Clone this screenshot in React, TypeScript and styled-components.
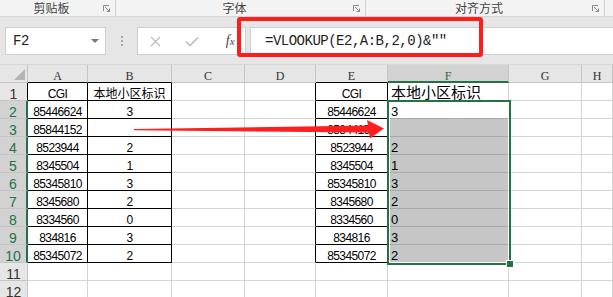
import React from 'react';
import styled, { createGlobalStyle } from 'styled-components';

const GREEN = '#217346';
const GRID = '#d4d4d4';
const HDR_LINE = '#c4c4c4';
const HDR_BG = '#e6e6e6';
const HDR_SEL = '#d2d2d2';
const SEL_FILL = '#c6c6c6';
const NUM_FONT = '"Liberation Sans", "Noto Sans CJK SC", sans-serif';
const CJK_FONT = '"Noto Sans CJK SC", "Liberation Sans", sans-serif';
const MONO_FONT = '"Liberation Mono", monospace';
const SERIF_FONT = '"Liberation Serif", serif';

const Global = createGlobalStyle`
  html, body { margin: 0; padding: 0; background: #e6e6e6; }
  body { width: 613px; height: 297px; overflow: hidden; font-family: ${NUM_FONT}; }
`;

const Page = styled.div`
  position: relative;
  width: 613px;
  height: 297px;
  overflow: hidden;
  background: #e6e6e6;
`;

/* ---------- ribbon group labels ---------- */
const RibbonLabels = styled.div`
  display: flex;
  height: 17px;
  box-sizing: border-box;
  background: #f3f3f3;
  border-bottom: 1px solid #d5d5d5;
`;

const Group = styled.div<{ $w: number }>`
  flex: 0 0 ${(p) => p.$w}px;
  display: flex;
  align-items: center;
  box-sizing: border-box;
  border-right: 1px solid #d2d2d2;
  height: 16px;
`;

const GroupLabel = styled.span`
  flex: 1;
  text-align: center;
  font: 12px/16px ${CJK_FONT};
  color: #444;
`;

const LauncherIcon = styled.svg`
  flex: 0 0 7px;
  width: 7px;
  height: 7px;
  margin-right: 5px;
`;

const Launcher = () => (
  <LauncherIcon viewBox="0 0 7 7">
    <path d="M0.5 6 V0.5 H6" stroke="#8a8a8a" strokeWidth="1" fill="none" />
    <path d="M2 2 L6.2 6.2" stroke="#8a8a8a" strokeWidth="1" fill="none" />
    <path d="M3.5 6.5 H6.5 V3.5" stroke="#8a8a8a" strokeWidth="1" fill="none" />
  </LauncherIcon>
);

/* ---------- formula bar ---------- */
const FormulaArea = styled.div`
  display: flex;
  align-items: center;
  height: 48px;
  box-sizing: border-box;
  padding: 10px 0 9px 5px;
  border-bottom: 1px solid #d6d6d6;
`;

const NameBox = styled.div`
  flex: 0 0 101px;
  height: 28px;
  box-sizing: border-box;
  background: #fff;
  border: 1px solid #cfcfcf;
  display: flex;
  align-items: center;
  padding: 0 6px 0 7px;
  font: 14px ${MONO_FONT};
  letter-spacing: -0.5px;
  color: #222;
`;

const NameText = styled.span`
  flex: 1;
`;

const DropTriangle = styled.span`
  width: 0;
  height: 0;
  border-left: 4px solid transparent;
  border-right: 4px solid transparent;
  border-top: 4px solid #777;
`;

const Splitter = styled.div`
  flex: 0 0 31px;
  display: flex;
  flex-direction: column;
  align-items: center;
  gap: 2px;
`;

const Dot = styled.span`
  width: 2px;
  height: 2px;
  background: #aaa;
`;

const ButtonBox = styled.div`
  flex: 0 0 109px;
  height: 28px;
  box-sizing: border-box;
  background: #fff;
  border: 1px solid #cfcfcf;
  display: flex;
  align-items: center;
`;

const IconSlot = styled.div`
  flex: 1;
  display: flex;
  align-items: center;
  justify-content: center;
`;

const FxText = styled.span`
  font: italic 14px ${SERIF_FONT};
  color: #444;
  margin-left: 6px;
  & > small {
    font-size: 11px;
  }
`;

const FormulaInput = styled.div`
  flex: 1;
  margin-left: 4px;
  height: 28px;
  box-sizing: border-box;
  background: #fff;
  border: 1px solid #cfcfcf;
  border-right: none;
  display: flex;
  align-items: center;
  padding-left: 14px;
  font: 14px ${MONO_FONT};
  letter-spacing: -0.5px;
  color: #222;
  white-space: nowrap;
`;

/* ---------- sheet ---------- */
const Sheet = styled.div`
  position: relative;
  display: grid;
  grid-template-columns: 28px 60px 84px 73px 71px 72px 121px 73px 1fr;
  grid-auto-rows: 18px;
  background: #fff;
`;

const BaseCell = styled.div<{
  $rc?: string;
  $bc?: string;
  $rw?: number;
  $bw?: number;
  $bg?: string;
}>`
  box-sizing: border-box;
  height: 18px;
  white-space: nowrap;
  overflow: visible;
  border-right: ${(p) => p.$rw ?? 1}px solid ${(p) => p.$rc ?? GRID};
  border-bottom: ${(p) => p.$bw ?? 1}px solid ${(p) => p.$bc ?? GRID};
  background: ${(p) => p.$bg ?? '#fff'};
`;

const ColHead = styled(BaseCell)<{ $sel?: boolean }>`
  text-align: center;
  padding-top: 5px;
  font: 12px/12px ${SERIF_FONT};
  color: ${(p) => (p.$sel ? GREEN : '#333')};
`;

const RowHead = styled(BaseCell)<{ $sel?: boolean }>`
  text-align: center;
  padding-top: 5px;
  font: 14px/12px ${NUM_FONT};
  color: ${(p) => (p.$sel ? GREEN : '#333')};
`;

type Kind = 'num' | 'cjk' | 'big' | 'bigcjk';

const DataCell = styled(BaseCell)<{ $kind: Kind }>`
  text-align: ${(p) => (p.$kind === 'big' || p.$kind === 'bigcjk' ? 'left' : 'center')};
  padding-left: ${(p) => (p.$kind === 'big' || p.$kind === 'bigcjk' ? 3 : 0)}px;
  padding-top: ${(p) => (p.$kind === 'bigcjk' ? 3 : p.$kind === 'cjk' ? 4 : 5)}px;
  font: ${(p) =>
    p.$kind === 'num'
      ? `12px/12px ${NUM_FONT}`
      : p.$kind === 'big'
      ? `13px/12px ${NUM_FONT}`
      : p.$kind === 'bigcjk'
      ? `15px/12px ${CJK_FONT}`
      : `12px/12px ${CJK_FONT}`};
  letter-spacing: ${(p) => (p.$kind === 'num' ? '-0.6px' : '0')};
  color: #000;
`;

const CornerTri = styled.svg`
  display: block;
  margin: 4px 0 0 14px;
`;

const Selection = styled.div`
  position: absolute;
  left: 387px;
  top: 35px;
  width: 124px;
  height: 165px;
  box-sizing: border-box;
  border: 2px solid ${GREEN};
  box-shadow: inset 0 0 0 1px #fff;
  pointer-events: none;
`;

const FillHandle = styled.div`
  position: absolute;
  right: -5px;
  bottom: -5px;
  width: 6px;
  height: 6px;
  background: ${GREEN};
  border: 1px solid #fff;
`;

/* ---------- annotations ---------- */
const RedBox = styled.div`
  position: absolute;
  left: 237px;
  top: 17px;
  width: 246px;
  height: 40px;
  box-sizing: border-box;
  border: 4px solid #ff1c1c;
  border-radius: 3px;
  pointer-events: none;
`;

const ArrowSvg = styled.svg`
  position: absolute;
  left: 0;
  top: 0;
  pointer-events: none;
`;

const colsLetters = ['A', 'B', 'C', 'D', 'E', 'F', 'G', 'H'];

const cgi = ['CGI', '85446624', '85844152', '8523944', '8345504', '85345810', '8345680', '8334560', '834816', '85345072'];
const ids = ['本地小区标识', '3', '', '2', '1', '3', '2', '0', '3', '2'];

const tableCols = new Set(['A', 'B', 'E']);

function renderRow(r: number) {
  const cells: React.ReactNode[] = [];
  const inData = r <= 10;
  const selRow = r >= 2 && r <= 10;
  cells.push(
    <RowHead
      key={`h${r}`}
      $sel={selRow}
      $bg={selRow ? HDR_SEL : HDR_BG}
      $bc={HDR_LINE}
      $rc={selRow ? GREEN : r === 1 ? '#000' : HDR_LINE}
      $rw={selRow ? 2 : 1}
    >
      {r}
    </RowHead>
  );
  colsLetters.forEach((c) => {
    const inTable = inData && tableCols.has(c);
    const leftOfTable = inData && c === 'D';
    let content = '';
    let kind: Kind = 'num';
    let bg = '#fff';
    let bc = inTable ? '#000' : GRID;
    if (inData) {
      if (c === 'A' || c === 'E') content = cgi[r - 1];
      if (c === 'B') {
        content = ids[r - 1];
        kind = r === 1 ? 'cjk' : 'num';
      }
      if (c === 'F') {
        content = ids[r - 1];
        kind = r === 1 ? 'bigcjk' : 'big';
        if (r >= 3) {
          bg = SEL_FILL;
          bc = '#a9a9a9';
        }
        if (r === 2) bc = '#a9a9a9';
      }
    }
    cells.push(
      <DataCell
        key={`${c}${r}`}
        $kind={kind}
        $bg={bg}
        $bc={bc}
        $rc={inTable || leftOfTable ? '#000' : GRID}
      >
        {content}
      </DataCell>
    );
  });
  return cells;
}

export default function App() {
  const rows = Array.from({ length: 12 }, (_, i) => i + 1);
  return (
    <Page>
      <Global />
      <RibbonLabels>
        <Group $w={116}>
          <GroupLabel>剪贴板</GroupLabel>
          <Launcher />
        </Group>
        <Group $w={250}>
          <GroupLabel>字体</GroupLabel>
          <Launcher />
        </Group>
        <Group $w={239}>
          <GroupLabel>对齐方式</GroupLabel>
          <Launcher />
        </Group>
      </RibbonLabels>

      <FormulaArea>
        <NameBox>
          <NameText>F2</NameText>
          <DropTriangle />
        </NameBox>
        <Splitter>
          <Dot />
          <Dot />
          <Dot />
        </Splitter>
        <ButtonBox>
          <IconSlot>
            <svg width="11" height="11" viewBox="0 0 11 11">
              <path d="M1 1 L10 10 M10 1 L1 10" stroke="#bdbdbd" strokeWidth="1.3" fill="none" />
            </svg>
          </IconSlot>
          <IconSlot>
            <svg width="14" height="11" viewBox="0 0 14 11">
              <path d="M1 5.5 L5 9.5 L13 1.5" stroke="#bdbdbd" strokeWidth="1.6" fill="none" />
            </svg>
          </IconSlot>
          <IconSlot>
            <FxText>
              f<small>x</small>
            </FxText>
          </IconSlot>
        </ButtonBox>
        <FormulaInput>=VLOOKUP(E2,A:B,2,0)&amp;""</FormulaInput>
      </FormulaArea>

      <Sheet>
        <BaseCell $bg={HDR_BG} $bc={HDR_LINE} $rc={HDR_LINE}>
          <CornerTri width="12" height="12" viewBox="0 0 12 12">
            <polygon points="11,0 11,11 0,11" fill="#b4b4b4" />
          </CornerTri>
        </BaseCell>
        {colsLetters.map((c) => (
          <ColHead
            key={c}
            $sel={c === 'F'}
            $bg={c === 'F' ? HDR_SEL : HDR_BG}
            $rc={HDR_LINE}
            $bc={c === 'F' ? GREEN : tableCols.has(c) ? '#000' : HDR_LINE}
            $bw={c === 'F' ? 2 : 1}
          >
            {c}
          </ColHead>
        ))}
        {rows.map((r) => renderRow(r))}
        <Selection>
          <FillHandle />
        </Selection>
      </Sheet>

      <RedBox />
      <ArrowSvg width="613" height="297" viewBox="0 0 613 297">
        <polygon
          points="134,129 368,125.5 367,120 384,128.5 370,138.5 369,132.5 134,130.3"
          fill="#ff1f1f"
        />
      </ArrowSvg>
    </Page>
  );
}
